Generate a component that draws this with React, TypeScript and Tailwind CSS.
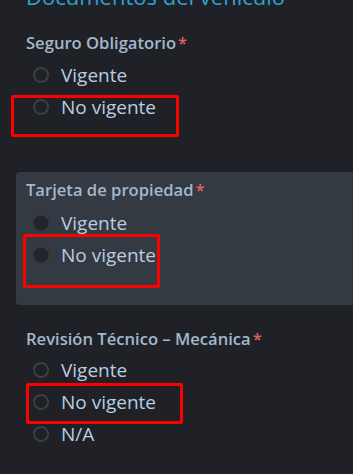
import { ReactNode } from 'react';

interface RadioProps {
  label: string;
  filled?: boolean;
}

function Radio({ label, filled = false }: RadioProps) {
  return (
    <label className="flex h-[32px] items-center">
      <span
        className={
          filled
            ? 'ml-[7px] h-[16px] w-[16px] rounded-full border border-[#2c3035] bg-[#22252a]'
            : 'ml-[7px] h-[16px] w-[16px] rounded-full border-2 border-[#3a3f46] bg-[#1f2126]'
        }
      />
      <span className="ml-[12px] text-[19px] leading-[32px] text-[#b9cde0]">{label}</span>
    </label>
  );
}

function Label({ children }: { children: ReactNode }) {
  return (
    <div className="text-[16.6px] font-semibold leading-[22px] text-[#a3b8cc]">
      {children}
      <span className="ml-[2px] text-[#e5605c]">*</span>
    </div>
  );
}

// red annotation frame drawn over the form
function Mark({ className }: { className: string }) {
  return <div className={`pointer-events-none absolute border-[3px] border-[#ff0000] rounded-[2px] ${className}`} />;
}

export default function App() {
  return (
    <div
      className="relative h-[474px] w-[353px] overflow-hidden bg-[#1f2126]"
      style={{ fontFamily: '"Open Sans", "Noto Sans", sans-serif' }}
    >
      <h2 className="mt-[-18px] pl-[26px] text-[22px] leading-[28px] text-[#2ba3d6]">
        Documentos del vehículo
      </h2>

      {/* Seguro Obligatorio */}
      <div className="mt-[22px] pl-[26px]">
        <Label>Seguro Obligatorio</Label>
        <div className="mt-[5px] flex flex-col">
          <Radio label="Vigente" />
          <Radio label="No vigente" />
        </div>
      </div>

      {/* Tarjeta de propiedad */}
      <div className="ml-[16px] mt-[49px] h-[133px] w-[360px] rounded-[4px] bg-[#343a41] pl-[10px] pt-[7px]">
        <Label>Tarjeta de propiedad</Label>
        <div className="mt-[6px] flex flex-col">
          <Radio label="Vigente" filled />
          <Radio label="No vigente" filled />
        </div>
      </div>

      {/* Revisión Técnico – Mecánica */}
      <div className="mt-[23px] pl-[26px]">
        <Label>Revisión Técnico – Mecánica</Label>
        <div className="mt-[4px] flex flex-col">
          <Radio label="Vigente" />
          <Radio label="No vigente" />
          <Radio label="N/A" />
        </div>
      </div>

      <Mark className="left-[11px] top-[95px] h-[42px] w-[168px]" />
      <Mark className="left-[23px] top-[234px] h-[54px] w-[137px]" />
      <Mark className="left-[26px] top-[383px] h-[41px] w-[157px]" />
    </div>
  );
}
